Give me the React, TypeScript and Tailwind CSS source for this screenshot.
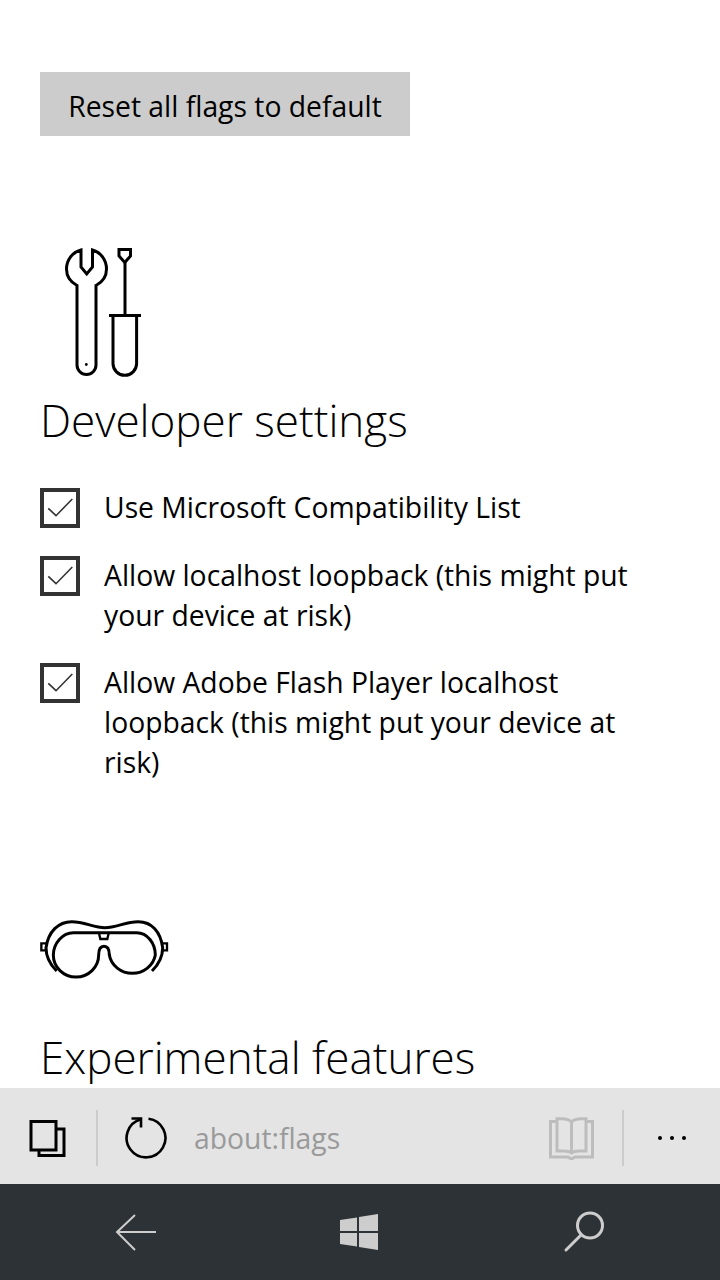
const font = { fontFamily: '"Open Sans", "Noto Sans", sans-serif' };

const Wrench = () => (
  <svg width="140" height="160" viewBox="0 0 140 160" fill="none" stroke="#000" strokeWidth="3" className="block">
    <path d="M51 20V37L56.7 44L62.5 37V20C71 22.5 76.5 30 76.5 39C76.5 46 72.5 52 66 55.5V135A9.5 9.5 0 0 1 47 135V55.5C40.5 52 36.5 46 36.5 39C36.5 30 42 22.5 51 20Z" />
    <circle cx="56.3" cy="134.5" r="1.4" fill="#000" stroke="none" />
    <path d="M89 19.5H100.5V26L94.8 32.5L89 26Z" />
    <path d="M95 32V85M79 85.5H111" />
    <path d="M83 85.5V133.5A11.8 11.8 0 0 0 106.6 133.5V85.5" />
  </svg>
);

const Goggles = () => (
  <svg width="150" height="90" viewBox="0 0 450 270" fill="none" stroke="#000" strokeWidth="9" className="block">
    <path d="M80 198C60 178 48 155 48 128C55 80 85 50 125 50C165 50 190 68 225 68C260 68 285 50 325 50C365 50 392 80 398 128C398 155 386 178 366 198" />
    <path d="M130 83H320C352 83 376 115 376 150A70 66 0 0 1 238 150C238 136 234 124 222 124C210 124 206 136 206 150A68 66 0 0 1 70 150C70 115 98 83 130 83Z" />
    <path d="M207 85L211 102H232L236 85" strokeWidth="7" />
    <path d="M48 115H34V136H48M397 115H411V136H397" strokeWidth="7" />
  </svg>
);

const Check = ({ children }: { children: string }) => (
  <div className="flex items-start gap-[24px]">
    <div className="w-10 h-10 shrink-0 border-4 border-[#333]">
      <svg width="32" height="32" viewBox="0 0 32 32" fill="none" stroke="#333" strokeWidth="1.6" className="block">
        <path d="M4.3 16.3L12 23.7L28.3 7" />
      </svg>
    </div>
    <p className="-mt-[1px] text-[28.3px] leading-[40px] text-black w-[560px]">{children}</p>
  </div>
);

export default function App() {
  return (
    <div className="w-[720px] h-[1280px] flex flex-col bg-white overflow-hidden" style={font}>
      <div className="flex-1 overflow-hidden pt-[72px] px-10">
        <button className="block w-[370px] h-16 pt-1 bg-[#cccccc] text-[28.3px] text-black text-center">
          Reset all flags to default
        </button>

        <div className="mt-[94px] -ml-[10px]">
          <Wrench />
        </div>
        <h2 className="mt-[2px] text-[44px] leading-[56px] font-light text-black">Developer settings</h2>

        <div className="mt-[40px] flex flex-col gap-[28px]">
          <Check>Use Microsoft Compatibility List</Check>
          <Check>Allow localhost loopback (this might put your device at risk)</Check>
          <Check>Allow Adobe Flash Player localhost loopback (this might put your device at risk)</Check>
        </div>

        <div className="mt-[123px] -ml-[10px]">
          <Goggles />
        </div>
        <h2 className="mt-[34px] text-[44px] leading-[56px] font-light text-black">Experimental features</h2>
      </div>

      <div className="h-24 shrink-0 pt-1 bg-[#e4e4e4] flex items-center">
        <div className="w-[96px] flex justify-center">
          <svg width="40" height="40" viewBox="0 0 40 40" fill="none" stroke="#000" strokeWidth="3">
            <path d="M3 3.5H28V32H3Z" />
            <path d="M28 11H36V37.5H11V32" />
          </svg>
        </div>
        <div className="w-[2px] h-14 bg-[#cccccc]" />
        <div className="ml-[27px] w-[42px]">
          <svg width="42" height="42" viewBox="0 0 42 42" fill="none" stroke="#000" strokeWidth="2.6" className="block">
            <path d="M23.5 1.7A19.4 19.4 0 1 1 16 2.2" />
            <path d="M6.5 1.5H16V10.5" />
          </svg>
        </div>
        <span className="ml-[27px] flex-1 text-[28.3px] text-[#9a9a9a]">about:flags</span>
        <svg width="48" height="44" viewBox="0 0 48 44" fill="none" stroke="#bdbdbd" strokeWidth="3" className="mr-[26px]">
          <path d="M9 5.5H2.5V41H20L23.5 43L27 41H44.5V5.5H38" />
          <path d="M23.5 37V6C21 3.5 18 2.7 14 2.7H9V35H16C19 35 22 35.5 23.5 37C25 35.5 28 35 31 35H38V2.7H33C29 2.7 26 3.5 23.5 6" />
        </svg>
        <div className="w-[2px] h-14 bg-[#cccccc]" />
        <div className="w-[96px] flex justify-center gap-[8px]">
          <span className="w-1 h-1 rounded-full bg-black" />
          <span className="w-1 h-1 rounded-full bg-black" />
          <span className="w-1 h-1 rounded-full bg-black" />
        </div>
      </div>

      <div className="h-24 shrink-0 bg-[#2d3236] grid grid-cols-3 items-center justify-items-center">
        <svg width="44" height="40" viewBox="0 0 44 40" fill="none" stroke="#cdcdcd" strokeWidth="2" className="ml-[32px]">
          <path d="M21 3L3 20L21 38M3 20H42" />
        </svg>
        <svg width="40" height="40" viewBox="0 0 40 40" fill="#cdcdcd" className="-ml-[2px]">
          <path d="M1 8L18 5.5V19H1ZM20 5L39 2V19H20ZM1 21H18V34.5L1 32ZM20 21H39V38L20 35Z" />
        </svg>
        <svg width="44" height="44" viewBox="0 0 44 44" fill="none" stroke="#cdcdcd" strokeWidth="3" className="-ml-[30px]">
          <circle cx="27" cy="15.5" r="12.5" />
          <path d="M18 25L3 40" strokeLinecap="round" />
        </svg>
      </div>
    </div>
  );
}
